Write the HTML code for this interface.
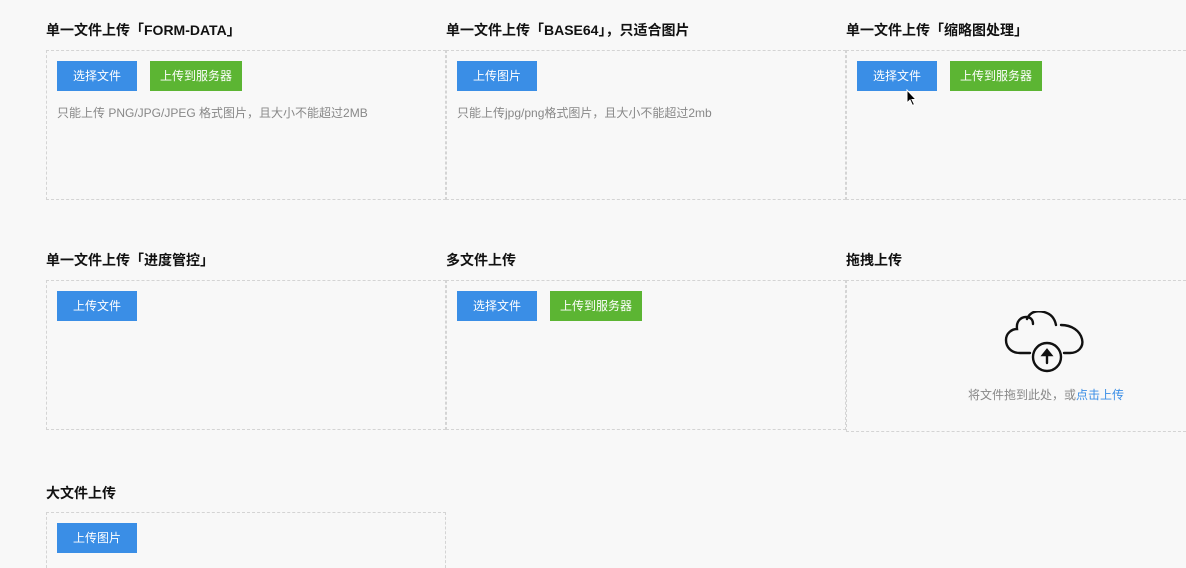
<!DOCTYPE html>
<html><head><meta charset="utf-8"><style>
*{margin:0;padding:0;box-sizing:border-box}
html,body{width:1186px;height:568px;overflow:hidden}
body{background:#f8f8f8;font-family:"Liberation Sans","Noto Sans CJK SC",sans-serif;position:relative}
.t{position:absolute;font-size:14px;font-weight:bold;color:#111;line-height:16px}
.box{position:absolute;border:1px dashed #d4d4d4;height:150px;width:400px}
.b{position:absolute;height:30px;width:80px;color:#fff;font-size:12px;line-height:30px;text-align:center;background:#3a8ee6}
.g{background:#5cb533;width:92px}
.h{position:absolute;font-size:12px;color:#888;line-height:14px}
</style></head><body>
<div class="t" style="left:46px;top:22px">单一文件上传「FORM-DATA」</div>
<div class="t" style="left:446px;top:22px">单一文件上传「BASE64」，只适合图片</div>
<div class="t" style="left:846px;top:22px">单一文件上传「缩略图处理」</div>
<div class="box" style="left:46px;top:50px"></div>
<div class="box" style="left:446px;top:50px"></div>
<div class="box" style="left:846px;top:50px;width:340px;border-right:none"></div>
<div class="b" style="left:57px;top:61px">选择文件</div>
<div class="b g" style="left:150px;top:61px">上传到服务器</div>
<div class="h" style="left:57px;top:106px">只能上传 PNG/JPG/JPEG 格式图片，且大小不能超过2MB</div>
<div class="b" style="left:457px;top:61px">上传图片</div>
<div class="h" style="left:457px;top:106px">只能上传jpg/png格式图片，且大小不能超过2mb</div>
<div class="b" style="left:857px;top:61px">选择文件</div>
<div class="b g" style="left:950px;top:61px">上传到服务器</div>
<svg style="position:absolute;left:906px;top:89px" width="12" height="18" viewBox="0 0 12 18"><path d="M1 1 L1 14 L4 11 L6.5 16.5 L8.5 15.5 L6 10.5 L10 10.5 Z" fill="#000" stroke="#fff" stroke-width="1"/></svg>

<div class="t" style="left:46px;top:252px">单一文件上传「进度管控」</div>
<div class="t" style="left:446px;top:252px">多文件上传</div>
<div class="t" style="left:846px;top:252px">拖拽上传</div>
<div class="box" style="left:46px;top:280px"></div>
<div class="box" style="left:446px;top:280px"></div>
<div class="box" style="left:846px;top:280px;width:340px;height:152px;border-right:none"></div>
<div class="b" style="left:57px;top:291px">上传文件</div>
<div class="b" style="left:457px;top:291px">选择文件</div>
<div class="b g" style="left:550px;top:291px">上传到服务器</div>
<svg style="position:absolute;left:1004px;top:311px" width="84" height="64" viewBox="0 0 84 64" fill="none" stroke="#111" stroke-width="2.4" stroke-linecap="round">
<path d="M26 42 H16 C7 42 2 36 2 29 C2 22 8 18 13 18 C12 10 17 6 22 6 C27 6 29 9 29 13"/>
<path d="M23 8 C26 1 32 -1 40 1 C48 3 51 9 52 14"/>
<path d="M57 14 C68 14 76 20 78 28 C80 36 74 42 66 42 H60"/>
<circle cx="43" cy="46" r="14"/>
<path d="M43 52 V42" />
<path d="M39 44 L43 39 L47 44 Z" fill="#111"/>
</svg>
<div class="h" style="left:968px;top:388px;color:#888">将文件拖到此处，或<span style="color:#3a8ee6">点击上传</span></div>

<div class="t" style="left:46px;top:485px">大文件上传</div>
<div class="box" style="left:46px;top:512px;height:56px;border-bottom:none"></div>
<div class="b" style="left:57px;top:523px">上传图片</div>
</body></html>
